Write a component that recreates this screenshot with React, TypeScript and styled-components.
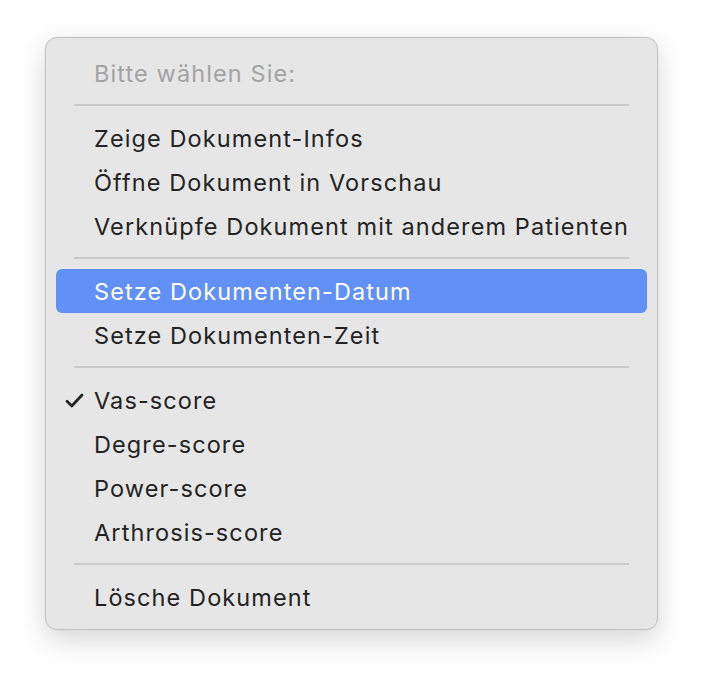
import styled, { createGlobalStyle } from "styled-components";

const GlobalStyle = createGlobalStyle`
  html, body {
    margin: 0;
    padding: 0;
    background: #ffffff;
  }
  body {
    font-family: Inter, "Noto Sans", "Liberation Sans", sans-serif;
    -webkit-font-smoothing: antialiased;
  }
`;

const Page = styled.div`
  width: 704px;
  height: 684px;
  padding: 37px 0 0 45px;
  box-sizing: border-box;
`;

const Menu = styled.div`
  width: 613px;
  box-sizing: border-box;
  padding: 13px 10px 10px;
  background: #e6e6e6;
  border: 1px solid #c4c4c4;
  border-radius: 12px;
  box-shadow: 0 10px 28px rgba(0, 0, 0, 0.16), 0 0 2px rgba(0, 0, 0, 0.08);
  display: flex;
  flex-direction: column;
`;

const Item = styled.div<{ $active?: boolean; $disabled?: boolean }>`
  position: relative;
  height: 44px;
  display: flex;
  align-items: center;
  padding-left: 38px;
  border-radius: 6px;
  font-size: 23.5px;
  letter-spacing: 1.1px;
  color: ${(p) => (p.$active ? "#ffffff" : p.$disabled ? "#a3a3a3" : "#232323")};
  background: ${(p) => (p.$active ? "#6190f7" : "transparent")};
  white-space: nowrap;
`;

const Separator = styled.div`
  height: 2px;
  margin: 9px 18px 10px;
  background: #cacaca;
`;

const Check = styled.svg`
  position: absolute;
  left: 9px;
  top: 15px;
`;

const CheckMark = () => (
  <Check width="19" height="15" viewBox="0 0 19 15">
    <path
      d="M2 8.2 L6.8 13 L17 2"
      fill="none"
      stroke="#232323"
      strokeWidth="2.8"
      strokeLinecap="round"
      strokeLinejoin="round"
    />
  </Check>
);

type Entry =
  | { kind: "sep" }
  | { kind: "item"; label: string; active?: boolean; disabled?: boolean; checked?: boolean };

const entries: Entry[] = [
  { kind: "item", label: "Bitte wählen Sie:", disabled: true },
  { kind: "sep" },
  { kind: "item", label: "Zeige Dokument-Infos" },
  { kind: "item", label: "Öffne Dokument in Vorschau" },
  { kind: "item", label: "Verknüpfe Dokument mit anderem Patienten" },
  { kind: "sep" },
  { kind: "item", label: "Setze Dokumenten-Datum", active: true },
  { kind: "item", label: "Setze Dokumenten-Zeit" },
  { kind: "sep" },
  { kind: "item", label: "Vas-score", checked: true },
  { kind: "item", label: "Degre-score" },
  { kind: "item", label: "Power-score" },
  { kind: "item", label: "Arthrosis-score" },
  { kind: "sep" },
  { kind: "item", label: "Lösche Dokument" },
];

export default function App() {
  return (
    <>
      <GlobalStyle />
      <Page>
        <Menu>
          {entries.map((e, i) =>
            e.kind === "sep" ? (
              <Separator key={i} />
            ) : (
              <Item key={i} $active={e.active} $disabled={e.disabled}>
                {e.checked && <CheckMark />}
                {e.label}
              </Item>
            )
          )}
        </Menu>
      </Page>
    </>
  );
}
